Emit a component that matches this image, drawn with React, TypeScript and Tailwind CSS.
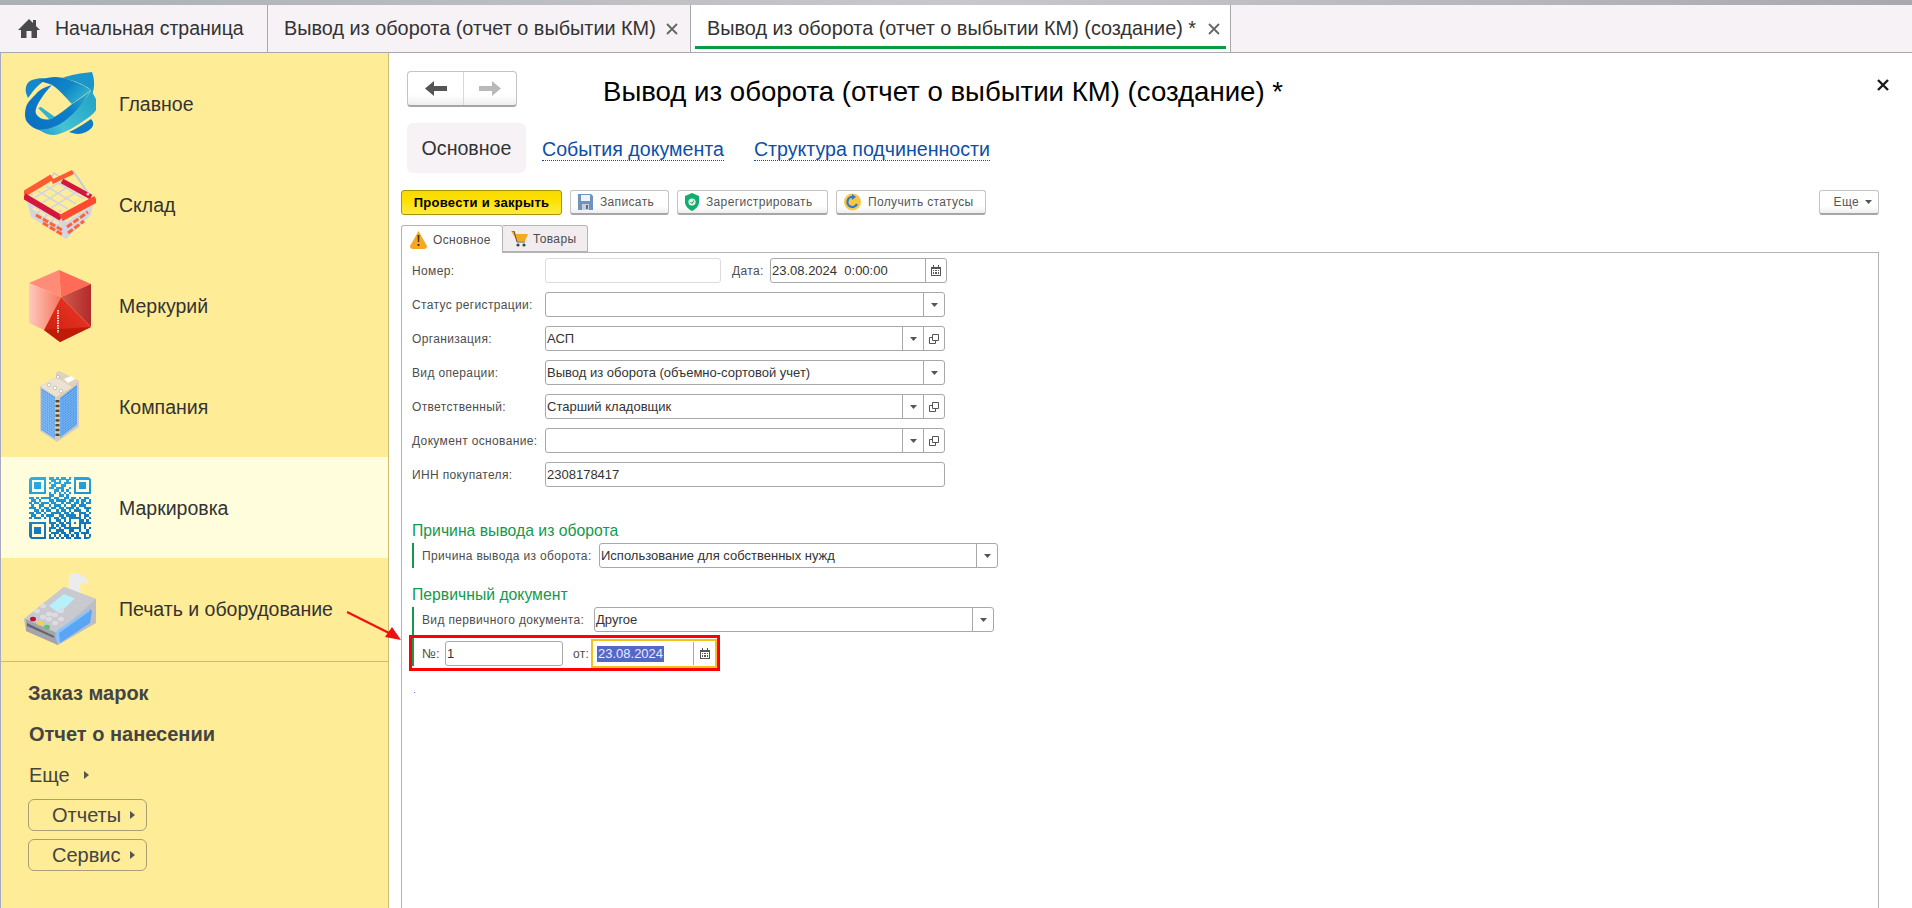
import React from "react"

const qrRows = [
  "1111111011010110101111111",
  "1000001001101001001000001",
  "1011101010111011101011101",
  "1011101001100110001011101",
  "1011101011011100101011101",
  "1000001000110101001000001",
  "1111111010101010101111111",
  "0000000011001101000000000",
  "1101011110110011011010110",
  "0110100011011110110101101",
  "1011011101100101101101011",
  "0100110010111010011011100",
  "1110101101101101110100111",
  "0011010110010110101110010",
  "1101101001111011010011101",
  "0110010111001101111010110",
  "1011101010110110111110101",
  "0000000010011010100011010",
  "1111111011101101101011111",
  "1000001001010110100010100",
  "1011101011101011111110101",
  "1011101010011100110010010",
  "1011101001110110101101110",
  "1000001010101011010100101",
  "1111111011010101101110111",
]

function Logo() {
  return (
    <svg width="72" height="63" viewBox="0 0 72 63">
      <defs>
        <linearGradient id="lg1" x1="0" y1="0.6" x2="1" y2="0.2">
          <stop offset="0" stopColor="#0a72c4" />
          <stop offset="0.6" stopColor="#0d7fc8" />
          <stop offset="1" stopColor="#2bb0cc" />
        </linearGradient>
        <linearGradient id="lg2" x1="0" y1="0" x2="1" y2="0.5">
          <stop offset="0" stopColor="#0b6fc0" />
          <stop offset="0.6" stopColor="#0f86c8" />
          <stop offset="1" stopColor="#2fb0cc" />
        </linearGradient>
        <linearGradient id="lg3" x1="0" y1="1" x2="1" y2="0.3">
          <stop offset="0" stopColor="#1a9ccc" />
          <stop offset="0.35" stopColor="#45c2d2" />
          <stop offset="1" stopColor="#25a6c8" />
        </linearGradient>
      </defs>
      <path d="M38 6 C46 3 58 1 68 0 C71 8 71 17 67 25 L67 18 C60 12 48 8 38 6 Z" fill="#1b96cc" />
      <path d="M2 15 C3 11 5 9 8 8 C14 6 20 6 25 7 C18 9 11 16 7 22 L4 26 C2 22 1 18 2 15 Z" fill="#1787cc" />
      <path d="M45 60 C52 57 60 52 67 47 C71 51 70 56 62 60 C56 63 50 62 45 60 Z" fill="#0f7cc6" />
      <path d="M14 36 L17 35 L31 45 L26 48 Z" fill="#2fb4cc" />
      <path d="M15 58 C20 61 25 63 30 63 C38 62 48 57 58 50 C64 46 70 42 72 38 C72 34 72 30 72 27 L67 18 C62 28 50 42 35 53 C28 56 20 58 15 58 Z" fill="url(#lg3)" />
      <path d="M15 9 C20 6 26 5 32 5 C44 6 58 12 67 18 L48 32 C42 26 36 18 28 13 C24 11 19 10 15 9 Z" fill="url(#lg2)" />
      <path d="M28 13 C20 15 15 18 12 22 C6 28 3 31 2 35 C0 42 1 47 3 50 C7 55 11 57 15 58 C22 58 29 56 35 53 C47 46 60 32 67 18 C60 24 54 28 48 32 C41 38 34 43 27 47 C22 48 17 47 15 45 C12 43 11 40 12 37 C13 33 15 30 17 27 C20 22 24 17 28 13 Z" fill="url(#lg1)" stroke="#ffffff66" strokeWidth="0.3" />
    </svg>
  )
}

function Basket() {
  return (
    <svg width="72" height="71" viewBox="0 0 72 71">
      <path d="M2 28 L37 48 L70 30 L67 46 L42 70 L7 48 Z" fill="#d3d6df" />
      <g fill="none" strokeDasharray="6 2">
        <path d="M7 33 L36 51" stroke="#ffe9a0" strokeWidth="2.6" />
        <path d="M9 39 L37 56" stroke="#ffe9a0" strokeWidth="2.6" />
        <path d="M12 46 L38 61" stroke="#ff6236" strokeWidth="3" />
        <path d="M19 54 L39 66" stroke="#ff6236" strokeWidth="3" />
        <path d="M42 52 L66 36" stroke="#ffe9a0" strokeWidth="2.6" />
        <path d="M43 58 L64 43" stroke="#ff6236" strokeWidth="3" />
        <path d="M44 64 L60 52" stroke="#ff6236" strokeWidth="3" />
      </g>
      <path d="M6 25 L30 10 L66 28 L37 44 Z" fill="#ffec97" />
      <g stroke="#d3d6df" strokeWidth="1.5" fill="none">
        <path d="M14 22 L44 40 M22 17 L52 35 M31 12 L60 30" />
        <path d="M27 39 L56 21 M18 34 L47 16 M10 29 L38 12" />
      </g>
      <path d="M49 2 L66 27" fill="none" stroke="#c9ccd8" strokeWidth="2.2" />
      <path d="M26 12 L30 4 L36 8" fill="none" stroke="#c9ccd8" strokeWidth="1.5" />
      <path d="M0 25 L28 8" stroke="#ff5a30" strokeWidth="6" />
      <path d="M38 12 L67 28" stroke="#d2163f" strokeWidth="5" />
      <path d="M28 13 L49 3" stroke="#ff5a30" strokeWidth="4.5" />
      <path d="M0 27 L37 49" stroke="#d2163f" strokeWidth="6" />
      <path d="M37 49 L72 30" stroke="#ff4a30" strokeWidth="7" />
      <circle cx="8" cy="25" r="1.6" fill="#f4c6d2" />
      <circle cx="36" cy="42" r="1.6" fill="#f4c6d2" />
      <circle cx="64" cy="25" r="1.6" fill="#f4c6d2" />
    </svg>
  )
}

function Ruby() {
  return (
    <svg width="62" height="72" viewBox="0 0 62 72">
      <defs>
        <linearGradient id="rb1" x1="0" y1="0" x2="1" y2="0">
          <stop offset="0" stopColor="#ffc9bd" />
          <stop offset="1" stopColor="#f4765f" />
        </linearGradient>
        <linearGradient id="rb2" x1="0" y1="0" x2="1" y2="0">
          <stop offset="0" stopColor="#cf5a4c" />
          <stop offset="1" stopColor="#b32a2a" />
        </linearGradient>
        <linearGradient id="rb3" x1="0" y1="1" x2="1" y2="0">
          <stop offset="0" stopColor="#c91c0c" />
          <stop offset="1" stopColor="#f03a2a" />
        </linearGradient>
      </defs>
      <path d="M0 13 L30 0 L32 27 Z" fill="#ff8b78" />
      <path d="M30 0 L62 14 L32 27 Z" fill="#ff6b57" />
      <path d="M0 13 L32 27 L15 60 L0 53 Z" fill="url(#rb1)" />
      <path d="M62 14 L62 57 L32 27 Z" fill="url(#rb2)" />
      <path d="M32 27 L62 57 L31 72 L15 60 Z" fill="url(#rb3)" />
      <path d="M15 60 L62 57 L31 72 Z" fill="#c01a08" />
      <path d="M29 40 L29 63" stroke="#ffd9d0" strokeWidth="2" strokeDasharray="1.5 1" />
    </svg>
  )
}

function Building() {
  const cols = [0, 1, 2, 3, 4, 5]
  const rows = Array.from({ length: 16 }, (_, i) => i)
  return (
    <svg width="40" height="72" viewBox="0 0 40 72">
      <path d="M0 15 L16 6 L16 2 L19 0 L39 10 L39 56 L17 71 L0 60 Z" fill="#d9cdb8" />
      <path d="M1 17 L15 26 L15 68 L1 59 Z" fill="#73b1f3" />
      <path d="M20 27 L37 14 L37 54 L20 67 Z" fill="#5aa2ef" />
      {cols.map((c) => (
        <path key={c} d={`M${3 + c * 2.2} ${19 + c * 1.2} v41`} stroke="#3f86d8" strokeWidth="0.5" />
      ))}
      {cols.map((c) => (
        <path key={c} d={`M${23 + c * 2.6} ${25 - c * 2} v38`} stroke="#3f86d8" strokeWidth="0.5" />
      ))}
      {rows.map((r) => (
        <path key={r} d={`M1 ${20 + r * 2.6} L15 ${29 + r * 2.6} M20 ${30 + r * 2.4} L37 ${17 + r * 2.4}`} stroke="#a9d0f6" strokeWidth="0.5" />
      ))}
      <path d="M0 15 L16 6 L32 16 L16 26 Z" fill="#ece2d2" />
      <path d="M16 6 L19 0 L39 10 L32 16 Z" fill="#e0d3bd" />
      <path d="M24 8 L31 5 L35 8 L28 12 Z" fill="#ffffff" />
      <circle cx="9" cy="14" r="1.8" fill="#fff" stroke="#a59880" strokeWidth="0.5" />
      <circle cx="15" cy="17" r="1.8" fill="#fff" stroke="#a59880" strokeWidth="0.5" />
      <circle cx="21" cy="20" r="1.8" fill="#fff" stroke="#a59880" strokeWidth="0.5" />
      <circle cx="18" cy="6" r="1.6" fill="#fff" stroke="#a59880" strokeWidth="0.5" />
      {[0, 1, 2, 3, 4, 5, 6, 7].map((i) => (
        <rect key={i} x="15.5" y={29 + i * 4.8} width="4" height="2.4" fill="#5a4a32" />
      ))}
    </svg>
  )
}

function Qr() {
  return (
    <svg width="62" height="62" viewBox="0 0 25 25" shapeRendering="crispEdges" className="rounded-[4px]">
      <defs>
        <linearGradient id="qr" gradientUnits="userSpaceOnUse" x1="0" y1="0" x2="6" y2="25">
          <stop offset="0" stopColor="#2cb2ea" />
          <stop offset="1" stopColor="#0f72b8" />
        </linearGradient>
      </defs>
      {qrRows.map((row, y) =>
        row.split("").map((cell, x) =>
          cell === "1" ? <rect key={`${x}-${y}`} x={x} y={y} width="1.02" height="1.02" fill="url(#qr)" /> : null,
        ),
      )}
    </svg>
  )
}

function Terminal() {
  return (
    <svg width="72" height="72" viewBox="0 0 72 72">
      <path d="M46 0 C52 -1 60 2 65 9 L62 11 C58 8 56 10 56 14 L57 24 L47 28 C44 18 44 8 46 0 Z" fill="#ececec" />
      <path d="M0 46 L40 14 L72 26 L72 50 L34 72 L2 58 Z" fill="#bdbdc4" />
      <path d="M0 46 L40 14 L72 26 L33 60 Z" fill="#c9c9d0" />
      <path d="M25 33 L40 21 L50 25 L50 26 L42 34 L35 40 Z" fill="#b5f0fb" />
      <path d="M2 46 L33 60 L34 72 L2 58 Z" fill="#a4a4ac" />
      <path d="M3 50 L30 63 L30 65 L3 53 Z" fill="#66666c" />
      {[
        [13, 38], [19, 33], [25, 41], [19, 44], [25, 46], [31, 42], [37, 46], [31, 50], [37, 38],
      ].map(([cx, cy], i) => (
        <ellipse key={i} cx={cx} cy={cy} rx="3" ry="2.2" fill="#dcdce2" />
      ))}
      <ellipse cx="9" cy="46" rx="3" ry="2.3" fill="#c4102a" />
      <ellipse cx="16" cy="50" rx="3" ry="2.3" fill="#f2d63a" />
      <ellipse cx="23" cy="54" rx="3" ry="2.3" fill="#5cc46a" />
      <path d="M33 62 L35 58 L66 36 L68 38 L66 50 L36 70 Z" fill="#5aa6f6" />
      <path d="M31 60 L35 56 L66 36 L66 38 L35 60 L36 70 L33 70 Z" fill="#8cc4fa" />
    </svg>
  )
}

function Tri({ className }: { className: string }) {
  return <svg width="5" height="8" viewBox="0 0 5 8" className={className}><path d="M0 0 L5 4 L0 8 Z" fill="#555" /></svg>
}

function Down() {
  return <svg width="7" height="4" viewBox="0 0 7 4"><path d="M0 0 H7 L3.5 4 Z" fill="#555" /></svg>
}

function Cal() {
  return (
    <svg width="10" height="11" viewBox="0 0 10 11">
      <path d="M0 2 H2 V0 H3 V2 H7 V0 H8 V2 H10 V11 H0 Z" fill="#555" />
      <path d="M1 4 H9 V10 H1 Z" fill="#fff" />
      <path d="M2 5 H3 V6 H2 Z M4 5 H6 V6 H4 Z M7 5 H8 V6 H7 Z M2 7 H3 V9 H2 Z M4 7 H6 V9 H4 Z M7 7 H8 V9 H7 Z" fill="#555" />
    </svg>
  )
}

function OpenIcon() {
  return (
    <svg width="10" height="10" viewBox="0 0 10 10" fill="none" stroke="#555">
      <path d="M3.5 0.5 H9.5 V6.5 H3.5 Z" />
      <path d="M3.5 3.5 H0.5 V9.5 H6.5 V6.5" />
    </svg>
  )
}

function CloseX({ size = 12, color = "#666", width = 1.8 }: { size?: number; color?: string; width?: number }) {
  return (
    <svg width={size} height={size} viewBox="0 0 12 12" stroke={color} strokeWidth={width}>
      <path d="M1 1 L11 11 M11 1 L1 11" />
    </svg>
  )
}

function Field({
  w,
  value,
  down,
  open,
  cal,
  disabled,
}: {
  w: string
  value?: string
  down?: boolean
  open?: boolean
  cal?: boolean
  disabled?: boolean
}) {
  return (
    <div className={`flex h-[25px] items-stretch rounded-[3px] border ${disabled ? "border-[#dcdcdc]" : "border-[#a8a8a8]"} bg-white ${w}`}>
      <span className="flex-1 truncate pl-[1px] text-[13px] leading-[24px] whitespace-pre text-[#333]">{value}</span>
      {down && (
        <span className="flex w-[21px] items-center justify-center border-l border-[#a8a8a8]"><Down /></span>
      )}
      {open && (
        <span className="flex w-[21px] items-center justify-center border-l border-[#a8a8a8]"><OpenIcon /></span>
      )}
      {cal && (
        <span className="flex w-[21px] items-center justify-center border-l border-[#a8a8a8]"><Cal /></span>
      )}
    </div>
  )
}

function Row({ label, children }: { label: string; children: React.ReactNode }) {
  return (
    <div className="mb-[9px] flex h-[25px] items-center">
      <span className="w-[133px] shrink-0 text-[12px] tracking-[0.35px] text-[#4d4d4d]">{label}</span>
      {children}
    </div>
  )
}

function CmdButton({ icon, text, w }: { icon: React.ReactNode; text: string; w: string }) {
  return (
    <button className={`flex h-[25px] items-center gap-[7px] rounded-[3px] border border-[#c4c4c4] border-b-[2px] border-b-[#a6a6a6] bg-linear-to-b from-white from-70% to-[#eeeeee] pl-[7px] text-[12px] tracking-[0.35px] text-[#555] ${w}`}>
      {icon}
      {text}
    </button>
  )
}

function SideItem({ icon, text, active }: { icon: React.ReactNode; text: string; active?: boolean }) {
  return (
    <div className={`flex h-[101px] items-center ${active ? "bg-[#fffddb]" : ""}`}>
      <div className="flex w-[118px] shrink-0 justify-center">
        <div className="flex w-[72px] justify-center">{icon}</div>
      </div>
      <span className="pt-[3px] text-[19.5px] text-[#333]">{text}</span>
    </div>
  )
}

function SideButton({ text }: { text: string }) {
  return (
    <div className="flex h-[32px] w-[119px] items-center rounded-[6px] border border-[#a99f72] pl-[23px] text-[20px] text-[#444]">
      {text}
      <Tri className="ml-auto mr-[11px]" />
    </div>
  )
}

export default function App() {
  return (
    <div className="relative flex h-[908px] w-[1912px] flex-col overflow-hidden bg-white font-['Liberation_Sans',Arial,sans-serif]">
      <div className="h-[5px] shrink-0 bg-linear-to-r from-[#aab0b4] via-[#c8c8cc] to-[#a8a8b0]" />

      <div className="flex h-[48px] shrink-0 border-b border-[#a9a9ad] bg-[#f6f2f6] pr-[3px]">
        <div className="flex w-[268px] items-center border-r border-[#a9a9ad] pl-[18px] text-[19.5px] text-[#333]">
          <svg width="22" height="19" viewBox="0 0 22 19">
            <path d="M11 0 L15 4 V1 H18 V7 L22 11 H19 V19 H13.5 V12 H8.5 V19 H3 V11 H0 Z" fill="#4a4a4a" />
          </svg>
          <span className="ml-[15px] pt-[1px]">Начальная страница</span>
        </div>
        <div className="flex w-[423px] items-center border-r border-[#a9a9ad] pl-[16px] text-[19.85px] text-[#333]">
          <span className="pt-[1px]">Вывод из оборота (отчет о выбытии КМ)</span>
          <span className="ml-auto mr-[12px]"><CloseX /></span>
        </div>
        <div className="relative flex w-[540px] items-center border-r border-[#a9a9ad] bg-white pl-[16px] text-[19.85px] text-[#333]">
          <span className="pt-[1px]">Вывод из оборота (отчет о выбытии КМ) (создание) *</span>
          <span className="ml-auto mr-[10px]"><CloseX /></span>
          <div className="absolute bottom-[3px] left-[4px] right-[4px] h-[3px] bg-[#0b9b45]" />
        </div>
      </div>

      <div className="flex min-h-0 flex-1">
        <aside className="flex w-[389px] shrink-0 flex-col border-l border-l-[#a9a9c0] border-r border-r-[#cdbb70] bg-[#ffec97]">
          <SideItem icon={<Logo />} text="Главное" />
          <SideItem icon={<Basket />} text="Склад" />
          <SideItem icon={<Ruby />} text="Меркурий" />
          <SideItem icon={<Building />} text="Компания" />
          <SideItem icon={<Qr />} text="Маркировка" active />
          <SideItem icon={<Terminal />} text="Печать и оборудование" />
          <div className="mt-[2px] border-t border-[#cdbb70] pl-[27px] pt-[16px] text-[20px] text-[#444]">
            <div className="h-[41px] font-bold">Заказ марок</div>
            <div className="h-[41px] pl-[1px] font-bold">Отчет о нанесении</div>
            <div className="flex h-[30px] items-center pl-[1px]">
              Еще
              <Tri className="ml-[14px]" />
            </div>
            <div className="flex flex-col gap-[8px] pt-[9px]">
              <SideButton text="Отчеты" />
              <SideButton text="Сервис" />
            </div>
          </div>
        </aside>

        <main className="flex min-w-0 flex-1 flex-col pl-[12px] pr-[3px]">
          <div className="mt-[18px] flex h-[36px] shrink-0 items-center pl-[6px]">
            <div className="flex h-[36px] w-[110px] rounded-[4px] border border-[#c4c4c4] border-b-[2px] border-b-[#a6a6a6] bg-linear-to-b from-white from-70% to-[#eeeeee]">
              <span className="flex w-[56px] items-center justify-center border-r border-[#d8d8d8]">
                <svg width="22" height="15" viewBox="0 0 22 15"><path d="M0 7.5 L9 0 V5 H22 V10 H9 V15 Z" fill="#555" /></svg>
              </span>
              <span className="flex flex-1 items-center justify-center">
                <svg width="22" height="15" viewBox="0 0 22 15"><path d="M22 7.5 L13 0 V5 H0 V10 H13 V15 Z" fill="#b9b9b9" /></svg>
              </span>
            </div>
            <h1 className="ml-[86px] mt-[5px] text-[27.6px] font-normal text-black">Вывод из оборота (отчет о выбытии КМ) (создание) *</h1>
            <span className="ml-auto mr-[20px] mt-[-8px]"><CloseX size={12} color="#1a1a1a" width={2.4} /></span>
          </div>

          <div className="mt-[16px] flex h-[50px] shrink-0 items-center pl-[6px] text-[19.6px]">
            <div className="flex h-[50px] w-[119px] items-center justify-center rounded-[6px] bg-[#f6f2f6] pt-[2px] text-[#333]">Основное</div>
            <span className="ml-[16px] border-b border-dotted border-[#0d4fa8] pt-[3px] leading-[21px] text-[#0d4fa8]">События документа</span>
            <span className="ml-[30px] border-b border-dotted border-[#0d4fa8] pt-[3px] leading-[21px] text-[#0d4fa8]">Структура подчиненности</span>
          </div>

          <div className="mt-[17px] flex h-[25px] shrink-0 gap-[8px] pr-[30px]">
            <button className="h-[25px] w-[161px] rounded-[3px] border border-[#a89500] bg-linear-to-b from-[#f9d900] via-[#ffe300] to-[#ffe93c] text-[13px] font-bold tracking-[0.3px] text-black">
              Провести и закрыть
            </button>
            <CmdButton
              w="w-[99px]"
              text="Записать"
              icon={
                <svg width="15" height="16" viewBox="0 0 15 16">
                  <path d="M0 0 H13 L15 2 V16 H0 Z" fill="#6f93bd" />
                  <path d="M3 1 H12 V7 H3 Z" fill="#eef3f8" />
                  <path d="M4 10 H11 V16 H4 Z" fill="#c5cfd9" />
                  <path d="M8 11 H10 V15 H8 Z" fill="#4d6f9a" />
                </svg>
              }
            />
            <CmdButton
              w="w-[151px]"
              text="Зарегистрировать"
              icon={
                <svg width="14" height="18" viewBox="0 0 14 18">
                  <path d="M7 0 L14 3 V9 C14 13 11 16 7 18 C3 16 0 13 0 9 V3 Z" fill="#0fae6a" />
                  <circle cx="7" cy="9" r="3.6" fill="#e8f6ef" />
                  <path d="M5.5 9 L7 10.5 L9 7.5" fill="none" stroke="#0a8f55" />
                </svg>
              }
            />
            <CmdButton
              w="w-[150px]"
              text="Получить статусы"
              icon={
                <svg width="17" height="18" viewBox="0 0 17 18">
                  <circle cx="8.5" cy="9" r="8.5" fill="#f7c744" />
                  <path d="M13 11 A5 5 0 1 1 9 4" fill="none" stroke="#2b78d8" strokeWidth="2.2" />
                  <path d="M8 1 L12 4 L8 7 Z" fill="#2b78d8" />
                </svg>
              }
            />
            <button className="ml-auto flex h-[25px] w-[60px] items-center justify-end gap-[6px] rounded-[3px] border border-[#c4c4c4] border-b-[2px] border-b-[#a6a6a6] bg-linear-to-b from-white from-70% to-[#eeeeee] pr-[6px] text-[12px] tracking-[0.35px] text-[#555]">
              Еще
              <Down />
            </button>
          </div>

          <div className="mt-[10px] flex h-[27px] shrink-0 text-[12px] tracking-[0.35px] text-[#4d4d4d]">
            <div className="z-10 mb-[-1px] flex h-[28px] w-[102px] items-center rounded-t-[3px] border border-b-0 border-[#b4b4b4] bg-white pl-[8px]">
              <svg width="17" height="18" viewBox="0 0 17 18" className="shrink-0">
                <path d="M8.5 0 L17 15 Q17 18 14 18 H3 Q0 18 0 15 Z" fill="#f7a823" />
                <path d="M7.5 4 H9.5 L9.2 11 H7.8 Z M7.5 13 H9.5 V15 H7.5 Z" fill="#4a3a1a" />
              </svg>
              <span className="ml-[6px]">Основное</span>
            </div>
            <div className="flex h-[27px] w-[85px] items-center rounded-tr-[3px] border border-l-0 border-[#b4b4b4] bg-[#f0ecf0] pl-[8px]">
              <svg width="17" height="16" viewBox="0 0 17 16" className="shrink-0">
                <path d="M0 0 H3 L5 3 H17 L14 10 H6 Z" fill="#f7a823" />
                <path d="M1 0 H3 L6 11 H14" fill="none" stroke="#555" />
                <circle cx="7" cy="14" r="1.6" fill="#444" />
                <circle cx="13" cy="14" r="1.6" fill="#444" />
              </svg>
              <span className="ml-[5px]">Товары</span>
            </div>
          </div>

          <section className="mr-[30px] min-h-0 flex-1 border border-b-0 border-[#b4b4b4] pl-[10px] pt-[5px]">
            <Row label="Номер:">
              <Field w="w-[176px]" disabled />
              <span className="ml-[11px] w-[38px] shrink-0 text-[12px] tracking-[0.35px] text-[#4d4d4d]">Дата:</span>
              <Field w="w-[177px]" value="23.08.2024  0:00:00" cal />
            </Row>
            <Row label="Статус регистрации:">
              <Field w="w-[400px]" down />
            </Row>
            <Row label="Организация:">
              <Field w="w-[400px]" value="АСП" down open />
            </Row>
            <Row label="Вид операции:">
              <Field w="w-[400px]" value="Вывод из оборота (объемно-сортовой учет)" down />
            </Row>
            <Row label="Ответственный:">
              <Field w="w-[400px]" value="Старший кладовщик" down open />
            </Row>
            <Row label="Документ основание:">
              <Field w="w-[400px]" down open />
            </Row>
            <Row label="ИНН покупателя:">
              <Field w="w-[400px]" value="2308178417" />
            </Row>

            <div className="mt-[34px] h-[22px] text-[15.75px] leading-[20px] text-[#14994a]">Причина вывода из оборота</div>
            <div className="flex h-[25px] items-center border-l-2 border-[#14994a] pl-[8px]">
              <span className="w-[177px] shrink-0 text-[12px] tracking-[0.35px] text-[#4d4d4d]">Причина вывода из оборота:</span>
              <Field w="w-[399px]" value="Использование для собственных нужд" down />
            </div>

            <div className="mt-[17px] h-[22px] text-[15.75px] leading-[20px] text-[#14994a]">Первичный документ</div>
            <div className="border-l-2 border-[#14994a] pl-[8px]">
              <div className="mb-[9px] flex h-[25px] items-center">
                <span className="w-[172px] shrink-0 text-[12px] tracking-[0.35px] text-[#4d4d4d]">Вид первичного документа:</span>
                <Field w="w-[400px]" value="Другое" down />
              </div>
              <div className="flex h-[25px] items-center">
                <span className="w-[23px] shrink-0 text-[13px] text-[#4d4d4d]">№:</span>
                <Field w="w-[118px]" value="1" />
                <span className="ml-[10px] w-[18px] shrink-0 text-[12px] tracking-[0.35px] text-[#4d4d4d]">от:</span>
                <div className="flex h-[29px] w-[126px] items-center border-2 border-[#f2c21a] bg-white">
                  <span className="ml-[4px] bg-[#5568c4] px-[1px] text-[13px] leading-[16px] text-[#e8ecff]">23.08.2024</span>
                  <span className="ml-auto flex h-[23px] w-[22px] items-center justify-center border-l border-[#a8a8a8]"><Cal /></span>
                </div>
              </div>
            </div>
            <div className="ml-[2px] mt-[26px] h-px w-px bg-[#6a6ae0]" />
          </section>
        </main>
      </div>

      <div className="pointer-events-none absolute left-[409px] top-[635px] h-[36px] w-[311px] border-[3px] border-[#ff0000]" />
      <svg className="pointer-events-none absolute left-[345px] top-[610px]" width="58" height="32" viewBox="0 0 58 32">
        <path d="M2 2 L46 24" stroke="#f01010" strokeWidth="2.2" />
        <path d="M56 30 L40 27 L47 17 Z" fill="#f01010" />
      </svg>
    </div>
  )
}
